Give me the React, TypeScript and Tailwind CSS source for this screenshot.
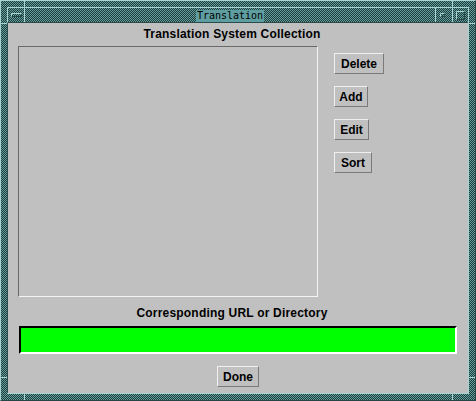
import React from "react";

const Btn = ({ label, w }: { label: string; w: string }) => (
  <div
    className={`${w} h-[21px] flex items-center justify-center border border-t-[#f0f0f0] border-l-[#f0f0f0] border-b-[#7a7a7a] border-r-[#7a7a7a] bg-[#c0c0c0] text-[12px] font-bold text-black leading-none`}
  >
    {label}
  </div>
);

export default function App() {
  const tick = "absolute bg-[#a8d4d4]";
  return (
    <div className="font-['Liberation_Sans',Arial,sans-serif]">
      <div className="relative w-[476px] h-[401px] p-[6px] border border-t-[#a8d4d4] border-l-[#a8d4d4] border-b-[#274646] border-r-[#274646] bg-[repeating-conic-gradient(#1f3c3d_0%_25%,#659e9e_0%_50%)] bg-size-[2px_2px]">
        {/* frame ticks */}
        <div className={`${tick} left-[23px] top-0 w-px h-[6px]`} />
        <div className={`${tick} left-[451px] top-0 w-px h-[6px]`} />
        <div className={`${tick} left-[23px] bottom-0 w-px h-[6px]`} />
        <div className={`${tick} left-[451px] bottom-0 w-px h-[6px]`} />
        <div className={`${tick} left-0 top-[22px] w-[6px] h-px`} />
        <div className={`${tick} right-0 top-[22px] w-[6px] h-px`} />
        <div className={`${tick} left-0 top-[376px] w-[6px] h-px`} />
        <div className={`${tick} right-0 top-[376px] w-[6px] h-px`} />

        <div className="flex flex-col h-full border-r border-b border-[#a8d4d4]">
          {/* title bar */}
          <div className="h-[16px] flex border-t border-l border-t-[#a8d4d4] border-l-[#a8d4d4] border-b border-b-[#2b4c4c]">
            <div className="w-[17px] shrink-0 border-r border-[#a8d4d4] pl-[3px] pt-[5px]">
              <svg width="11" height="4" className="block">
                <path d="M0.5 3.5 V0.5 H10.5" stroke="#a8d4d4" fill="none" />
                <path d="M1 3.5 H10.5 V1" stroke="#274646" fill="none" />
              </svg>
            </div>
            <div className="flex-1 min-w-0 flex justify-center items-end">
              <div className="bg-[#5f9ea0] h-[12px] px-[1px] text-[10px] leading-[12px] text-black font-['DejaVu_Sans_Mono',monospace]">
                Translation
              </div>
            </div>
            <div className="w-[18px] shrink-0 border-x border-[#a8d4d4] pl-[4px] pt-[5px]">
              <svg width="5" height="4" className="block">
                <path d="M0.5 3.5 V0.5 H4.5" stroke="#a8d4d4" fill="none" />
                <path d="M1 3.5 H4.5 V1" stroke="#274646" fill="none" />
              </svg>
            </div>
            <div className="w-[15px] shrink-0 pl-[3px] pt-[3px]">
              <svg width="9" height="9" className="block">
                <path d="M0.5 8.5 V0.5 H8.5" stroke="#a8d4d4" fill="none" />
                <path d="M1 8.5 H8.5 V1" stroke="#274646" fill="none" />
              </svg>
            </div>
          </div>

          {/* client */}
          <div className="flex-1 bg-[#c0c0c0] border-l border-[#2b4c4c] flex flex-col text-black">
            <div className="mt-[3px] h-[16px] leading-[16px] text-[12px] font-bold text-center pr-[12px] tracking-[0.2px]">
              Translation System Collection
            </div>
            <div className="mt-[4px] flex items-start">
              <div className="ml-[10px] w-[300px] h-[251px] border border-t-[#6a6a6a] border-l-[#6a6a6a] border-b-[#f4f4f4] border-r-[#f4f4f4] bg-[#c0c0c0]" />
              <div className="ml-[16px] mt-[7px] flex flex-col gap-[12px]">
                <Btn label="Delete" w="w-[50px]" />
                <Btn label="Add" w="w-[34px]" />
                <Btn label="Edit" w="w-[35px]" />
                <Btn label="Sort" w="w-[38px]" />
              </div>
            </div>
            <div className="mt-[8px] h-[16px] leading-[16px] text-[12px] font-bold text-center pr-[12px] tracking-[0.2px]">
              Corresponding URL or Directory
            </div>
            <div className="mt-[5px] ml-[11px] w-[438px] h-[28px] border-2 border-t-black border-l-black border-b-white border-r-white bg-[#00ff00]" />
            <div className="mt-[12px] self-center">
              <Btn label="Done" w="w-[42px]" />
            </div>
          </div>
        </div>
      </div>
    </div>
  );
}
